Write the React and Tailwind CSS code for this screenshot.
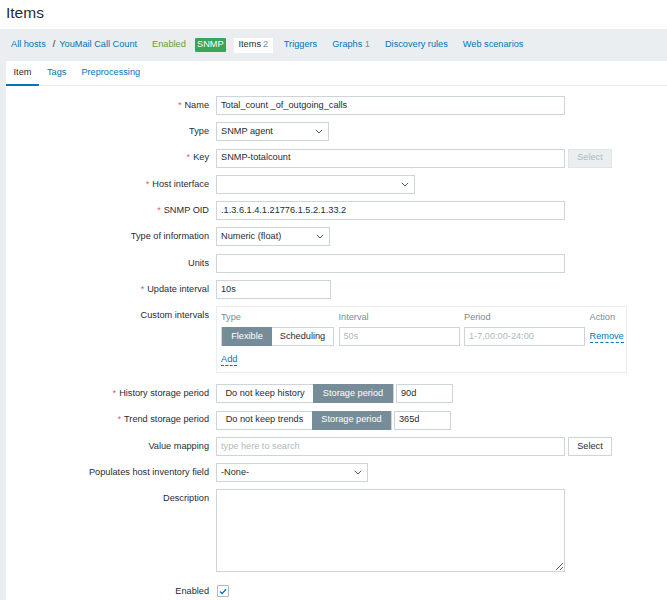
import React from "react";

const Chevron = () => (
  <svg width="8" height="5" viewBox="0 0 8 5" className="shrink-0">
    <path d="M0.8 0.8 L4 4 L7.2 0.8" fill="none" stroke="#4f5b63" strokeWidth="1" />
  </svg>
);

const Req = () => <span className="text-[#e45959] mr-[3px]">*</span>;

const Label = ({ children, required }) => (
  <div className="w-[203px] h-[19px] shrink-0 flex items-center justify-end">
    {required && <Req />}
    {children}
  </div>
);

const Input = ({ value, placeholder, w }) => (
  <div className={`h-[19px] border border-[#cdd5da] px-[4px] flex items-center ${w}`}>
    {value ? value : <span className="text-[#acbbc2]">{placeholder}</span>}
  </div>
);

const Select = ({ value, w }) => (
  <div className={`h-[19px] border border-[#cdd5da] pl-[4px] pr-[5px] flex items-center justify-between ${w}`}>
    <span>{value}</span>
    <Chevron />
  </div>
);

const Row = ({ label, required, children, extra = "" }) => (
  <div className={`flex items-start ${extra}`}>
    <Label required={required}>{label}</Label>
    <div className="ml-[7px] flex items-center">{children}</div>
  </div>
);

const Segment = ({ items }) => (
  <div className="flex h-[19px] border border-[#cdd5da]">
    {items.map((it) => (
      <div
        key={it.label}
        className={`flex items-center justify-center ${it.w} ${it.on ? "bg-[#768d99] text-white border border-[#768d99] -my-px" : "bg-white"}`}
      >
        {it.label}
      </div>
    ))}
  </div>
);

export default function App() {
  return (
    <div className="w-[667px] h-[600px] overflow-hidden bg-[#ebeef0] font-['Liberation_Sans',Arial,sans-serif] text-[9.2px] text-[#1f2c33] leading-none">
      <header className="h-[29px] bg-white pl-[6px] flex items-center">
        <h1 className="text-[15.5px] text-[#1f2c33] -mt-[3px]">Items</h1>
      </header>

      <nav className="h-[32px] flex items-center pl-[11px] text-[#0275b8]">
        <span>All hosts</span>
        <span className="text-[#1f2c33] ml-[7px] mr-[4px]">/</span>
        <span>YouMail Call Count</span>
        <span className="ml-[15px] text-[#59a232]">Enabled</span>
        <span className="ml-[9px] w-[31px] h-[14px] bg-[#38a55b] text-white flex items-center justify-center rounded-[1px]">SNMP</span>
        <span className="ml-[8px] h-[15px] w-[39px] bg-white flex items-center justify-center text-[#1f2c33]">
          Items <span className="ml-[2px] text-[#768d99]">2</span>
        </span>
        <span className="ml-[11px]">Triggers</span>
        <span className="ml-[15px]">
          Graphs <span className="text-[#768d99]">1</span>
        </span>
        <span className="ml-[15px]">Discovery rules</span>
        <span className="ml-[15px]">Web scenarios</span>
      </nav>

      <div className="ml-[6px] bg-white h-full">
        <div className="flex h-[25px] border-b border-[#ebeef0]">
          <div className="px-[7px] flex items-center border-b-2 border-[#0275b8] -mb-px w-[33px] justify-center">Item</div>
          <div className="px-[7px] flex items-center text-[#0275b8] ml-[1px]">Tags</div>
          <div className="px-[7px] flex items-center text-[#0275b8] ml-[1px]">Preprocessing</div>
        </div>

        <div className="pt-[10px] flex flex-col gap-y-[7.3px]">
          <Row label="Name" required>
            <Input value="Total_count _of_outgoing_calls" w="w-[349px]" />
          </Row>
          <Row label="Type">
            <Select value="SNMP agent" w="w-[113px]" />
          </Row>
          <Row label="Key" required>
            <Input value="SNMP-totalcount" w="w-[349px]" />
            <div className="ml-[3px] h-[19px] w-[44px] border border-[#dfe4e7] bg-[#ebeef0] text-[#acbbc2] flex items-center justify-center">Select</div>
          </Row>
          <Row label="Host interface" required>
            <Select value="" w="w-[199px]" />
          </Row>
          <Row label="SNMP OID" required>
            <Input value=".1.3.6.1.4.1.21776.1.5.2.1.33.2" w="w-[349px]" />
          </Row>
          <Row label="Type of information">
            <Select value="Numeric (float)" w="w-[114px]" />
          </Row>
          <Row label="Units">
            <Input value="" w="w-[349px]" />
          </Row>
          <Row label="Update interval" required>
            <Input value="10s" w="w-[115px]" />
          </Row>
          <Row label="Custom intervals" extra="mb-[3.6px]">
            <div className="w-[411px] h-[67px] border border-[#ebeef0] pl-[4px] pt-[4px]">
              <div className="grid grid-cols-[113px_121px_121px_auto] gap-x-[4.5px] text-[#768d99] h-[12px] items-center">
                <span>Type</span>
                <span>Interval</span>
                <span>Period</span>
                <span>Action</span>
              </div>
              <div className="grid grid-cols-[113px_121px_121px_auto] gap-x-[4.5px] mt-[4px] items-center">
                <Segment
                  items={[
                    { label: "Flexible", w: "w-[50px]", on: true },
                    { label: "Scheduling", w: "flex-1" },
                  ]}
                />
                <Input value="" placeholder="50s" w="w-[121px]" />
                <Input value="" placeholder="1-7,00:00-24:00" w="w-[121px]" />
                <span className="text-[#0275b8] border-b border-dashed border-[#0275b8] w-fit leading-[11px]">Remove</span>
              </div>
              <div className="mt-[8px]">
                <span className="text-[#0275b8] border-b border-dashed border-[#0275b8] leading-[11px] inline-block">Add</span>
              </div>
            </div>
          </Row>
          <Row label="History storage period" required>
            <Segment
              items={[
                { label: "Do not keep history", w: "w-[96px]" },
                { label: "Storage period", w: "w-[80px]", on: true },
              ]}
            />
            <div className="ml-[2px]">
              <Input value="90d" w="w-[57px]" />
            </div>
          </Row>
          <Row label="Trend storage period" required>
            <Segment
              items={[
                { label: "Do not keep trends", w: "w-[95px]" },
                { label: "Storage period", w: "w-[79px]", on: true },
              ]}
            />
            <div className="ml-[2px]">
              <Input value="365d" w="w-[57px]" />
            </div>
          </Row>
          <Row label="Value mapping">
            <Input value="" placeholder="type here to search" w="w-[349px]" />
            <div className="ml-[3px] h-[19px] w-[44px] border border-[#cdd5da] bg-white flex items-center justify-center">Select</div>
          </Row>
          <Row label="Populates host inventory field">
            <Select value="-None-" w="w-[152px]" />
          </Row>
          <Row label="Description" extra="mb-[2px]">
            <textarea
              readOnly
              className="w-[349px] h-[83px] border border-[#cdd5da] block outline-none"
            />
          </Row>
          <Row label="Enabled">
            <div className="h-[19px] flex items-center ml-[1px]">
              <div className="w-[12px] h-[12px] border border-[#acbbc2] rounded-[1px] flex items-center justify-center">
                <svg width="8" height="7" viewBox="0 0 8 7">
                  <path d="M1 3.6 L3.1 5.6 L7 1.2" fill="none" stroke="#0275b8" strokeWidth="1.4" />
                </svg>
              </div>
            </div>
          </Row>
        </div>
      </div>
    </div>
  );
}
